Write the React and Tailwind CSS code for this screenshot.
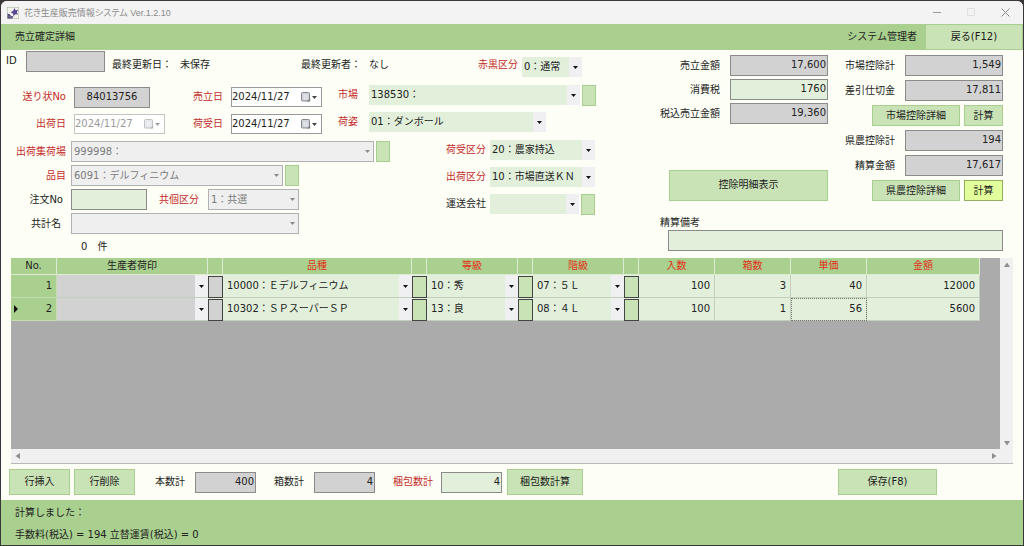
import React from "react";

function Arrow({ dim }) {
  return (
    <svg viewBox="0 0 5 3" className="h-[3px] w-[5px]" aria-hidden="true">
      <path d="M0 0h5L2.5 3z" fill={dim ? "#8a8a8a" : "#111"} />
    </svg>
  );
}

function Label({ htmlFor, red, left, className = "", children }) {
  return (
    <label
      htmlFor={htmlFor}
      className={`shrink-0 whitespace-nowrap ${left ? "text-left" : "text-right"} ${red ? "text-[#c42b2b]" : "text-[#222]"} ${className}`}
    >
      {children}
    </label>
  );
}

function Combo({ id, value, disabled, className = "", label }) {
  return (
    <span className={`relative flex shrink-0 ${className}`}>
      <select
        id={id}
        aria-label={label}
        disabled={disabled}
        defaultValue={value}
        className={
          disabled
            ? "w-full appearance-none border border-[#b1b1b1] bg-[#efefef] pl-[2px] text-[#7b7b7b] opacity-100"
            : "w-full appearance-none bg-[#e1efdb] pl-[2px] text-[#222]"
        }
      >
        <option>{value}</option>
      </select>
      <span
        className={`pointer-events-none absolute inset-y-0 right-0 flex w-[13px] items-center justify-center ${disabled ? "" : "bg-[#f0eff1]"}`}
      >
        <Arrow dim={disabled} />
      </span>
    </span>
  );
}

function Field({ id, value = "", gray, center, className = "" }) {
  return (
    <input
      id={id}
      defaultValue={value}
      readOnly={gray}
      className={`min-w-0 rounded-none border border-[#8b8b8b] px-px pb-[2px] text-[#222] ${gray ? "bg-[#d2d2d2]" : "bg-[#e1efdb]"} ${center ? "text-center" : "text-right"} ${className}`}
    />
  );
}

function DateField({ id, disabled }) {
  return (
    <span
      className={`flex h-5 w-[91px] shrink-0 items-center border bg-white ${disabled ? "border-[#c4c4c4]" : "border-[#9a9a9a]"}`}
    >
      <input
        id={id}
        defaultValue="2024/11/27"
        disabled={disabled}
        className={`w-[66px] min-w-0 bg-transparent ${disabled ? "text-[#9a9a9a]" : "text-[#222]"}`}
      />
      <button
        type="button"
        disabled={disabled}
        aria-label="カレンダー"
        className={`flex items-center gap-px pl-[3px] ${disabled ? "opacity-50" : ""}`}
      >
        <svg viewBox="0 0 10 10" className="h-[10px] w-[10px]" aria-hidden="true">
          <rect x="0.5" y="0.5" width="8" height="8.5" rx="1" fill="#cfd3da" stroke="#85858b" />
          <path d="M1.5 4h6M1.5 6h6M3.5 2.5v5.5M5.5 2.5v5.5" stroke="#eceef2" strokeWidth="0.5" />
          <path d="M6 9.5l3.2-3.2V9.5z" fill="#777" />
        </svg>
        <svg viewBox="0 0 5 3" className="h-[3px] w-[5px]" aria-hidden="true">
          <path d="M0 0h5L2.5 3z" fill="#444" />
        </svg>
      </button>
    </span>
  );
}

function Btn({ className = "", active, children, ...rest }) {
  return (
    <button
      type="button"
      className={`shrink-0 whitespace-nowrap border text-[#1c1c1c] ${active ? "border-[#8fae62] bg-[#e2ff9c]" : "border-[#a9cf90] bg-[#c9e2b6]"} ${className}`}
      {...rest}
    >
      {children}
    </button>
  );
}

const Lookup = ({ label, className = "h-[21px]" }) => (
  <Btn aria-label={label} className={`w-[14px] ${className}`} />
);

function ScrollBtn({ d, label }) {
  return (
    <button type="button" aria-label={label} className="flex h-[13px] w-[13px] items-center justify-center">
      <svg viewBox="0 0 6 6" className="h-[6px] w-[6px]" aria-hidden="true">
        <path d={d} fill="#8e8e8e" />
      </svg>
    </button>
  );
}

const rows = [
  { no: 1, kind: "10000：Ｅデルフィニウム", grade: "10：秀", size: "07：５Ｌ", per: 100, boxes: 3, price: 40, amount: 12000 },
  { no: 2, kind: "10302：ＳＰスーパーＳＰ", grade: "13：良", size: "08：４Ｌ", per: 100, boxes: 1, price: 56, amount: 5600 },
];

const headers = [
  ["No.", false, "w-[46px]"],
  ["生産者荷印", false, "w-[151px]"],
  ["", false, "w-[15px]"],
  ["品種", true, "w-[189px]"],
  ["", false, "w-[15px]"],
  ["等級", true, "w-[91px]"],
  ["", false, "w-[15px]"],
  ["階級", true, "w-[91px]"],
  ["", false, "w-[15px]"],
  ["入数", true, "w-[76px]"],
  ["箱数", true, "w-[76px]"],
  ["単価", true, "w-[76px]"],
  ["金額", true, "w-[113px]"],
];

function CellCombo({ value, gray, label }) {
  return (
    <td className={`border-b border-[#c3cfbd] p-0 ${gray ? "bg-[#d2d2d2]" : "bg-[#e1efdb]"}`}>
      <span className="relative flex h-[22px]">
        <select
          aria-label={label}
          defaultValue={value}
          className="w-full appearance-none bg-transparent pl-1 text-[#222]"
        >
          <option>{value}</option>
        </select>
        <span className="pointer-events-none absolute inset-y-0 right-0 flex w-[13px] items-center justify-center bg-[#f0eff1]">
          <Arrow />
        </span>
      </span>
    </td>
  );
}

function CellButton({ gray, label }) {
  return (
    <td className="bg-[#e1efdb] p-0">
      <button
        type="button"
        aria-label={label}
        className={`block h-[22px] w-full border border-[#444] ${gray ? "bg-[#d2d2d2]" : "bg-[#c9e2b6]"}`}
      />
    </td>
  );
}

function NumCell({ value, focus }) {
  return (
    <td
      className={`border-r border-b border-[#c3cfbd] bg-[#e1efdb] py-0 pr-1 pl-0 text-right ${focus ? "outline-1 -outline-offset-1 outline-dotted outline-[#777]" : ""}`}
    >
      {value}
    </td>
  );
}

function Grid() {
  return (
    <section className="mr-[10px] ml-[10px] flex min-h-[160px] flex-1 flex-col border-b border-[#b8b8b8] bg-[#f0f0f0]">
      <div className="flex flex-1">
        <div className="min-w-0 flex-1 overflow-hidden bg-[#ababab]">
          <table className="w-[969px] table-fixed border-separate border-spacing-0 text-[#222]">
            <thead>
              <tr className="h-[17px]">
                {headers.map(([text, red, width], i) => (
                  <th
                    key={i}
                    className={`border-r border-b border-[#dcebd2] bg-[#a9d08e] p-0 text-center leading-4 font-normal ${width} ${red ? "text-[#e0301a]" : "text-[#222]"}`}
                  >
                    {text}
                  </th>
                ))}
              </tr>
            </thead>
            <tbody>
              {rows.map((r) => (
                <tr key={r.no} className="h-[23px]">
                  <th scope="row" className="border-r border-b border-[#c3dcb2] bg-[#a9d08e] p-0 font-normal">
                    <span className="flex items-center justify-between pr-1 pl-[3px]">
                      <svg viewBox="0 0 4 8" className="h-2 w-1" aria-hidden="true">
                        {r.no === 2 && <path d="M0 0l4 4-4 4z" fill="#111" />}
                      </svg>
                      {r.no}
                    </span>
                  </th>
                  <CellCombo value="" gray label="生産者荷印" />
                  <CellButton gray label="生産者荷印検索" />
                  <CellCombo value={r.kind} label="品種" />
                  <CellButton label="品種検索" />
                  <CellCombo value={r.grade} label="等級" />
                  <CellButton label="等級検索" />
                  <CellCombo value={r.size} label="階級" />
                  <CellButton label="階級検索" />
                  <NumCell value={r.per} />
                  <NumCell value={r.boxes} />
                  <NumCell value={r.price} focus={r.no === 2} />
                  <NumCell value={r.amount} />
                </tr>
              ))}
            </tbody>
          </table>
        </div>
        <div className="flex w-[13px] flex-col justify-between">
          <ScrollBtn label="上へ" d="M3 0.5L6 5H0z" />
          <ScrollBtn label="下へ" d="M3 5.5L6 1H0z" />
        </div>
      </div>
      <div className="flex h-[14px] items-center justify-between pr-[13px]">
        <ScrollBtn label="左へ" d="M0.5 3L5 0v6z" />
        <ScrollBtn label="右へ" d="M5.5 3L1 0v6z" />
      </div>
    </section>
  );
}

function FormLeft() {
  return (
    <div className="shrink-0">
      <div className="flex h-[35px] items-start pl-[5px]">
        <Label htmlFor="id" left className="w-5 pt-1">ID</Label>
        <Field id="id" gray className="mt-px h-[21px] w-[79px]" />
        <div className="flex pt-2">
          <span className="w-[68px] pl-[7px] whitespace-nowrap">最終更新日：</span>
          <span className="w-[121px] pl-[7px]">未保存</span>
          <span className="w-[68px] pl-[7px] whitespace-nowrap">最終更新者：</span>
          <span className="w-[116px] pl-[7px]">なし</span>
        </div>
        <Label htmlFor="redblack" red left className="w-10 pt-2">赤黒区分</Label>
        <Combo id="redblack" value="0：通常" className="mt-[7px] ml-1 h-5 w-[60px]" />
      </div>

      <div className="flex">
        <div className="flex flex-col gap-[7px] pt-[2px]">
          <div className="flex h-5 items-center">
            <Label htmlFor="slip" red className="w-[65px]">送り状No</Label>
            <Field id="slip" gray center value="84013756" className="ml-2 h-[21px] w-[76px]" />
            <Label htmlFor="sold" red className="ml-[15px] w-[58px]">売立日</Label>
            <span className="ml-2 flex"><DateField id="sold" /></span>
          </div>
          <div className="flex h-5 items-center">
            <Label htmlFor="ship" red className="w-[65px]">出荷日</Label>
            <span className="ml-2 flex"><DateField id="ship" disabled /></span>
            <Label htmlFor="recv" red className="w-[58px]">荷受日</Label>
            <span className="ml-2 flex"><DateField id="recv" /></span>
          </div>
        </div>
        <div className="flex flex-col gap-[7px]">
          <div className="flex h-5 items-center">
            <Label htmlFor="market" red className="w-9">市場</Label>
            <Combo id="market" value="138530：" className="ml-[11px] h-5 w-[211px]" />
            <span className="ml-[2px] flex"><Lookup label="市場検索" /></span>
          </div>
          <div className="flex h-5 items-center">
            <Label htmlFor="pack" red className="w-9">荷姿</Label>
            <Combo id="pack" value="01：ダンボール" className="ml-[11px] h-5 w-[177px]" />
          </div>
        </div>
      </div>

      <div className="flex pt-[6px]">
        <div className="flex flex-col gap-[3px] pt-px">
          <div className="flex items-center">
            <Label htmlFor="depot" red className="w-[65px]">出荷集荷場</Label>
            <Combo id="depot" disabled value="999998：" className="ml-[5px] h-[21px] w-[303px]" />
            <span className="ml-[2px] flex"><Lookup label="出荷集荷場検索" /></span>
          </div>
          <div className="flex items-center">
            <Label htmlFor="item" red className="w-[65px]">品目</Label>
            <Combo id="item" disabled value="6091：デルフィニウム" className="ml-[5px] h-[21px] w-[212px]" />
            <span className="ml-[2px] flex"><Lookup label="品目検索" /></span>
          </div>
          <div className="flex items-center">
            <Label htmlFor="order" className="w-[62px]">注文No</Label>
            <Field id="order" className="ml-2 h-[21px] w-[76px]" />
            <Label htmlFor="share" red className="w-[52px]">共個区分</Label>
            <Combo id="share" disabled value="1：共選" className="ml-[9px] h-[21px] w-[91px]" />
          </div>
          <div className="flex items-center">
            <Label htmlFor="pool" className="w-[60px]">共計名</Label>
            <Combo id="pool" disabled value="" className="ml-[10px] h-[21px] w-[228px]" />
          </div>
          <div className="flex gap-[10px] pt-[3px] pl-20">
            <span>0</span>
            <span>件</span>
          </div>
        </div>
        <div className="ml-14 flex flex-col gap-[7px]">
          <div className="flex h-5 items-center">
            <Label htmlFor="rcls" red left className="w-10">荷受区分</Label>
            <Combo id="rcls" value="20：農家持込" className="ml-1 h-5 w-[105px]" />
          </div>
          <div className="flex h-5 items-center">
            <Label htmlFor="scls" red left className="w-10">出荷区分</Label>
            <Combo id="scls" value="10：市場直送ＫＮ" className="ml-1 h-5 w-[105px]" />
          </div>
          <div className="flex h-5 items-center">
            <Label htmlFor="carrier" left className="w-10">運送会社</Label>
            <Combo id="carrier" value="" className="ml-1 h-5 w-[89px]" />
            <span className="ml-[2px] flex"><Lookup label="運送会社検索" /></span>
          </div>
        </div>
      </div>
    </div>
  );
}

function Amount({ id, label, value, gray = true }) {
  return (
    <div className="flex items-center justify-end gap-[10px]">
      <Label htmlFor={id}>{label}</Label>
      <Field id={id} gray={gray} value={value} className="h-[21px] w-[98px] shrink-0" />
    </div>
  );
}

function FormRight() {
  return (
    <div className="ml-auto w-[343px] shrink-0 pt-[5px]">
      <div className="flex justify-between">
        <div className="flex w-[168px] flex-col gap-[3px]">
          <Amount id="a1" label="売立金額" value="17,600" />
          <Amount id="a2" label="消費税" value="1760" gray={false} />
          <Amount id="a3" label="税込売立金額" value="19,360" />
          <Btn className="mt-auto h-[31px] w-[159px] self-end pb-[2px]">控除明細表示</Btn>
        </div>
        <div className="flex flex-col gap-1">
          <Amount id="b1" label="市場控除計" value="1,549" />
          <Amount id="b2" label="差引仕切金" value="17,811" />
          <div className="flex justify-end gap-1">
            <Btn className="h-[21px] w-[88px]">市場控除詳細</Btn>
            <Btn className="h-[21px] w-[39px]">計算</Btn>
          </div>
          <Amount id="b3" label="県農控除計" value="194" />
          <Amount id="b4" label="精算金額" value="17,617" />
          <div className="flex justify-end gap-1">
            <Btn className="h-[21px] w-[88px]">県農控除詳細</Btn>
            <Btn active className="h-[21px] w-[39px]">計算</Btn>
          </div>
        </div>
      </div>
      <div className="flex flex-col items-start pt-[15px]">
        <Label htmlFor="memo">精算備考</Label>
        <span className="flex w-full pl-2">
          <Field id="memo" className="h-[21px] w-full" />
        </span>
      </div>
    </div>
  );
}

export default function App() {
  return (
    <div
      lang="ja"
      className="flex min-h-screen flex-col bg-[#3b363a] p-px font-['DejaVu_Sans','Noto_Sans_CJK_JP',sans-serif] text-[10px] leading-[14px] text-[#222]"
    >
      <div className="flex flex-1 flex-col overflow-hidden rounded-t-md bg-[#fdfff6]">
        <div className="flex h-[23px] items-center bg-[#f3f3f3] pl-[6px]">
          <svg viewBox="0 0 24 24" className="h-3 w-3" aria-hidden="true">
            <rect x="0.5" y="0.5" width="23" height="23" fill="#f4f4ee" stroke="#a3b090" />
            <path d="M15 2l2.200 4.500 5.300-.8-3 4.800 2.500 4.500-5.500-.5-3.500 4-1-5.500-5-2.500 5-2.500z" fill="#5b4893" />
            <path d="M1 13l4.500 1.500L8 18l5 1-2.500 4H1z" fill="#4c4470" />
            <path d="M2 17l3 3 4 0" fill="none" stroke="#a99bd0" strokeWidth="1.500" />
          </svg>
          <h1 className="pl-[5px] font-['Liberation_Sans','Noto_Sans_CJK_JP',sans-serif] text-[9px] text-[#8c8c8c] [font-feature-settings:'palt']">
            花き生産販売情報システム Ver.1.2.10
          </h1>
          <div className="ml-auto flex items-center gap-[25px] pr-[13px]">
            <button type="button" aria-label="最小化" className="flex">
              <svg viewBox="0 0 9 9" className="h-[9px] w-[9px]"><path d="M0 4.500h8" stroke="#999" /></svg>
            </button>
            <button type="button" aria-label="最大化" disabled className="flex">
              <svg viewBox="0 0 9 9" className="h-[9px] w-[9px]"><path d="M.5.500h7v7h-7z" fill="none" stroke="#e0e0e0" /></svg>
            </button>
            <button type="button" aria-label="閉じる" className="flex">
              <svg viewBox="0 0 9 9" className="h-[9px] w-[9px]"><path d="M.5.500l8 8M8.500.500l-8 8" stroke="#8a8a8a" /></svg>
            </button>
          </div>
        </div>

        <header className="flex h-[26px] items-center bg-[#a9d08e] pl-[14px]">
          <h2>売立確定詳細</h2>
          <span className="ml-auto pr-2">システム管理者</span>
          <Btn className="w-[98px] self-stretch">戻る(F12)</Btn>
        </header>

        <form className="flex h-52 pr-5">
          <FormLeft />
          <FormRight />
        </form>

        <Grid />

        <div className="flex h-9 shrink-0 items-center pl-2">
          <Btn className="h-[26px] w-[61px]">行挿入</Btn>
          <Btn className="ml-1 h-[26px] w-[61px]">行削除</Btn>
          <Label htmlFor="t1" className="ml-5">本数計</Label>
          <Field id="t1" gray value="400" className="ml-[10px] h-[21px] w-[61px]" />
          <Label htmlFor="t2" className="ml-[18px]">箱数計</Label>
          <Field id="t2" gray value="4" className="ml-[10px] h-[21px] w-[61px]" />
          <Label htmlFor="t3" red className="ml-[18px]">梱包数計</Label>
          <Field id="t3" value="4" className="ml-2 h-[21px] w-[61px]" />
          <Btn className="ml-[5px] h-[26px] w-[76px]">梱包数計算</Btn>
          <Btn className="mr-[86px] ml-auto h-[26px] w-[99px]">保存(F8)</Btn>
        </div>

        <footer className="flex h-[45px] flex-col gap-2 bg-[#a9d08e] pt-[6px] pl-[14px]">
          <p>計算しました：</p>
          <p>手数料(税込) = 194 立替運賃(税込) = 0</p>
        </footer>
      </div>
    </div>
  );
}
